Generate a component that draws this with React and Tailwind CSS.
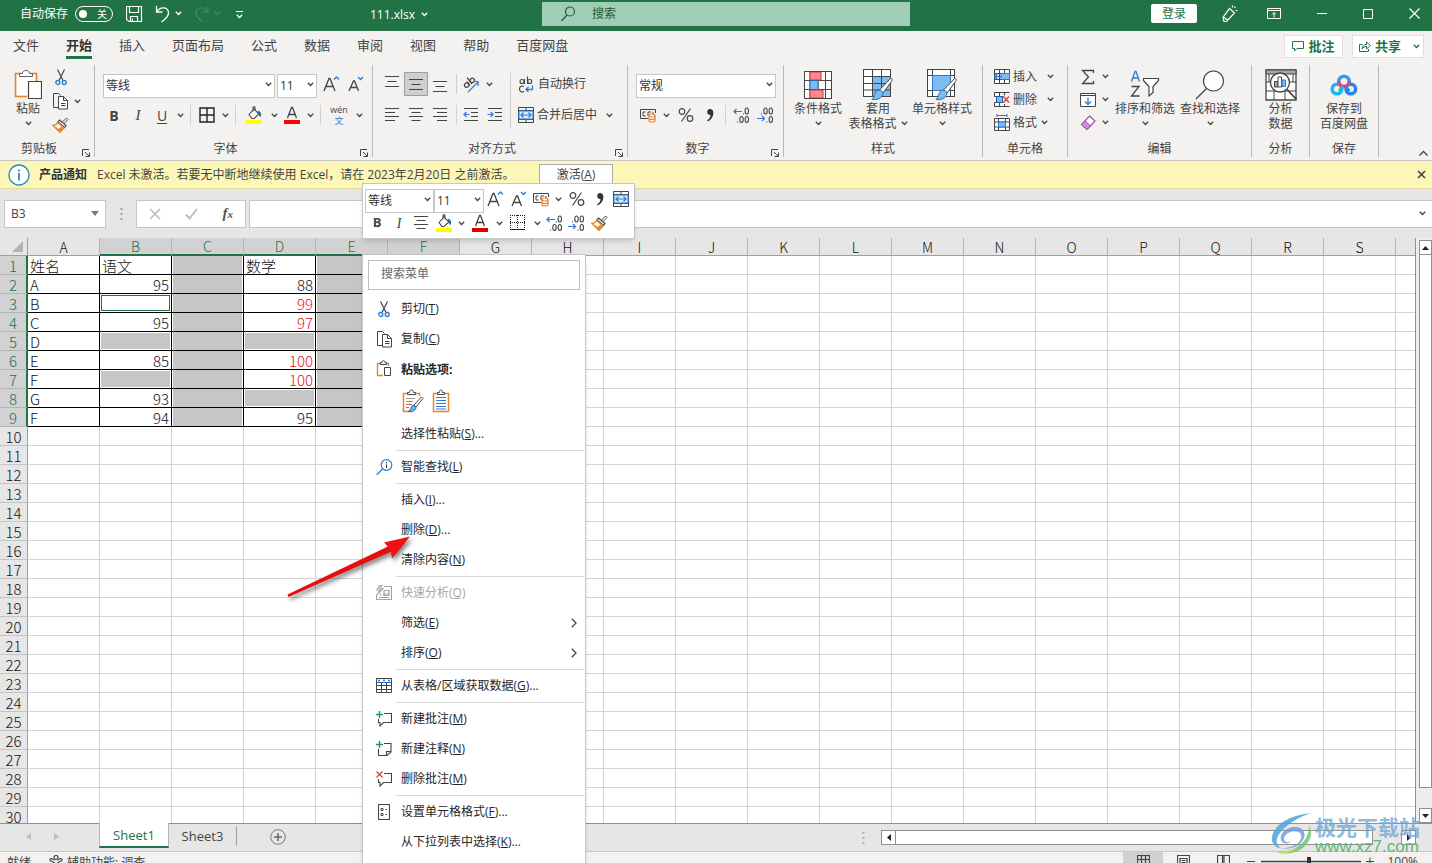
import React from 'react';

const INK = '#444444';
const BLUE = '#2b7cd3';

function Svg({ w = 16, h = 16, vb, children, className = '' }) {
  return (
    <svg
      width={w}
      height={h}
      viewBox={vb || `0 0 ${w} ${h}`}
      fill="none"
      stroke={INK}
      strokeWidth="1"
      className={`shrink-0 ${className}`}
      aria-hidden="true"
    >
      {children}
    </svg>
  );
}

const Chevron = ({ className = '' }) => (
  <Svg w={7} h={5} className={className}>
    <path d="M.8.8 3.5 3.5 6.200.8" stroke="currentColor" strokeWidth="1.3" />
  </Svg>
);

const CaretBtn = ({ label = '更多选项' }) => (
  <button type="button" aria-label={label} className="flex h-6 w-3 items-center justify-center">
    <Chevron />
  </button>
);

/* ---------- icons ---------- */
const Scissors = () => (
  <Svg w={12} h={17}>
    <path d="M2.500.5 8 11.500M9.500.5 4 11.500" stroke={INK} strokeWidth="1.200" />
    <circle cx="2.800" cy="13.500" r="2" stroke={BLUE} strokeWidth="1.300" />
    <circle cx="9.200" cy="13.500" r="2" stroke={BLUE} strokeWidth="1.300" />
  </Svg>
);
const Copy = () => (
  <Svg w={17} h={17}>
    <path d="M6.500 14.500h-5V.5h5l2 2" />
    <path d="M6.500 3.500h5l4 4v8.500h-9zM11.500 3.500v4h4M9 10.500h4.500M9 12.500h4.500" fill="#fff" />
  </Svg>
);
const Painter = () => (
  <Svg w={17} h={16}>
    <path d="M10 5.500 14.500 1l1.500 1.500L11.500 7" fill="#fff" />
    <path d="M7.500 3l6.500 5.500-1.500 2-6.500-5.500z" fill="#fff" strokeWidth="1.200" />
    <path d="M5.500 5.500l6.500 5.500-4 4.500L1 8.500c2 0 3.500-1 4.500-3z" fill="#fff" stroke="#e8852b" strokeWidth="1.300" />
    <path d="M2 9l5 3 2-2.500 2 2-3 3.500z" fill="#e8852b" stroke="none" />
  </Svg>
);
const PasteBig = () => (
  <Svg w={28} h={32}>
    <path d="M7 4.500H1.500v23H13M17 4.500h5.500V12" stroke="#e8852b" strokeWidth="1.600" />
    <path d="M3 6h18v6h-7v14H3z" fill="#fff" stroke="none" />
    <path d="M5.500 7.500v-3h3c0-4 7-4 7 0h3v3z" fill="#fff" stroke="#666" />
    <path d="M14.500 12.500h13v17h-13z" fill="#fff" stroke={INK} strokeWidth="1.200" />
  </Svg>
);
const PasteSmall = () => (
  <Svg w={16} h={17}>
    <path d="M4 3.500H1.500v12H7M11 3.500h1.500V6" stroke="#e8852b" strokeWidth="1.400" />
    <path d="M4.500 4.500v-2h1.500c0-2.500 3-2.500 3 0h1.500v2z" fill="#fff" />
    <path d="M8.500 7.500h6v8h-6z" fill="#fff" />
  </Svg>
);
const PasteFormat = () => (
  <Svg w={22} h={24}>
    <path d="M6 4.500H1.500v18H10M14 4.500h3.500V7" stroke="#e8852b" strokeWidth="1.500" />
    <path d="M5.500 5.500v-2h2c0-3.500 4-3.500 4 0h2v2z" fill="#fff" />
    <path d="M4 9.500h9M4 12.500h7" stroke="#999" />
    <path d="M4 15.500h6M4 18.500h3" stroke="#e05050" />
    <path d="M19.500 8l1.500 1.500-7 8.500-2-2z" fill="#fff" />
    <path d="M11.500 16l2.500 2.500c0 3-3.500 4.500-7.500 4 2.500-1 2-5.500 5-6.500z" fill="#6bb1ea" stroke="#1f6cb5" />
  </Svg>
);
const PasteText = () => (
  <Svg w={18} h={24}>
    <path d="M5 4.500H1.500v18h15v-18H13" stroke="#e8852b" strokeWidth="1.500" />
    <path d="M5.500 5.500v-2h2c0-3.500 3-3.500 3 0h2v2z" fill="#fff" />
    <path d="M4 8.500h10M4 11.500h10M4 14.500h10M4 17.500h10M4 20h10" stroke={BLUE} />
  </Svg>
);
const FontSize = ({ up }) => (
  <Svg w={17} h={18}>
    <path d={up ? 'M1 16 6 3.500h1L12 16M3 11.500h7' : 'M2 16 6.500 6h1L11.500 16M3.500 12.500h6.500'} strokeWidth="1.300" />
    <path d={up ? 'M11 4.500l2.500-2.500L16 4.500' : 'M11 2l2.500 2.500L16 2'} stroke={BLUE} strokeWidth="1.300" />
  </Svg>
);
const Borders = () => (
  <Svg w={16} h={16}>
    <path d="M1 1h14v14H1zM8 1v14M1 8h14" stroke="#222" strokeWidth="1.400" />
  </Svg>
);
const DottedBorders = () => (
  <Svg w={16} h={16}>
    <path d="M0 .5h15M.5 0v15M14.500 0v15M7.500 0v15M0 7.500h15" stroke="#222" strokeDasharray="1 1" />
    <path d="M0 14.500h15" stroke="#222" />
  </Svg>
);
const Bucket = () => (
  <Svg w={17} h={18}>
    <path d="M3 8.500 8 3l5 5-5 4.500H6zM7 5.500V1.500c0-1 2-1 2 0V5" fill="#fff" strokeWidth="1.100" />
    <path d="M12 5.500c2 .5 2.500 2.500 2 5" stroke="#1f5fae" strokeWidth="1.800" />
    <path d="M0 14h16v4H0z" fill="#ffff00" stroke="none" />
  </Svg>
);
const FontColor = ({ red = '#ff0000' }) => (
  <Svg w={16} h={18}>
    <path d="M3.500 12 7.500 1.500h1L12.500 12M5 8.500h6" strokeWidth="1.300" />
    <path d="M0 14h16v4H0z" fill={red} stroke="none" />
  </Svg>
);
const Lines = ({ d }) => (
  <Svg w={16} h={16}>
    <path d={d} strokeWidth="1.200" />
  </Svg>
);
const Orientation = () => (
  <Svg w={18} h={17}>
    <g strokeWidth="1.200" transform="rotate(-40 6 6)">
      <circle cx="3" cy="7.500" r="2.200" />
      <path d="M5.500 5v5" />
      <path d="M8 2v8" />
      <circle cx="10.300" cy="7.500" r="2.200" />
    </g>
    <path d="M6 16 16 6M11.500 5.500h4.500V10" stroke={BLUE} strokeWidth="1.200" />
  </Svg>
);
const Wrap = () => (
  <Svg w={15} h={17}>
    <g strokeWidth="1.100">
      <circle cx="3" cy="5.500" r="2" />
      <path d="M5.500 3v5M8.500.5v7.500" />
      <circle cx="10.700" cy="5.500" r="2" />
      <path d="M5 10.500c-3-1.500-4.500.5-4.500 2.500s2 4 4.500 2.500" />
    </g>
    <path d="M13.500 9.500v4H7M9.500 11 7 13.500 9.500 16" stroke={BLUE} strokeWidth="1.300" />
  </Svg>
);
const Merge = () => (
  <Svg w={16} h={16}>
    <path d="M.5.5h15v15H.5zM.5 3.500h15M.5 12.500h15M8 .5v3M8 12.500v3" />
    <path d="M1 4h14v8H1z" fill="#d8ebfa" stroke={BLUE} />
    <path d="M3 8h10M5.500 5.500 3 8l2.500 2.500M10.500 5.500 13 8l-2.500 2.500" stroke={BLUE} strokeWidth="1.200" />
  </Svg>
);
const Indent = ({ right }) => (
  <Svg w={16} h={14}>
    <path d="M1 .5h14M8 4.500h7M8 8.500h7M1 12.500h14" strokeWidth="1.100" />
    <path d={right ? 'M.5 6.500h5.500M3.500 4 6 6.500 3.500 9' : 'M1 6.500h5.500M3.500 4 1 6.500 3.500 9'} stroke={BLUE} strokeWidth="1.200" />
  </Svg>
);
const Money = () => (
  <Svg w={17} h={15}>
    <path d="M8 10.500H.5v-9h15V5" />
    <path d="M5.500 4H3v4h2.500M8 8V4h3M13 4v2" />
    <path d="M9 7.500v5c0 2 6 2 6 0v-5" fill="#fff" stroke="#e8852b" strokeWidth="1.200" />
    <ellipse cx="12" cy="7.500" rx="3" ry="1.500" fill="#fff" stroke="#e8852b" strokeWidth="1.200" />
    <path d="M9 10.200c0 1.800 6 1.800 6 0" stroke="#e8852b" strokeWidth="1.200" />
  </Svg>
);
const Percent = () => (
  <Svg w={16} h={16}>
    <circle cx="4" cy="4.500" r="2.800" strokeWidth="1.200" />
    <circle cx="12" cy="11.500" r="2.800" strokeWidth="1.200" />
    <path d="M12.500 1.500l-9 13" strokeWidth="1.200" />
  </Svg>
);
const Comma = () => (
  <Svg w={10} h={14}>
    <path d="M5 1a3 3 0 1 0 .5 6C5.500 9.500 4 11 2 12.500l.8.8C6 11.800 8.500 9 8.300 4.500 8.200 2.200 7 1 5 1z" fill="#333" stroke="none" />
  </Svg>
);
const Decimal = ({ less }) => (
  <Svg w={17} h={17}>
    {less ? (
      <>
        <path d="M0 11.500h7.500M5 9l2.500 2.500L5 14" stroke={BLUE} strokeWidth="1.200" />
        <g strokeWidth="1.100">
          <ellipse cx="8.500" cy="4" rx="1.700" ry="3" />
          <ellipse cx="13.800" cy="4" rx="1.700" ry="3" />
          <ellipse cx="13.800" cy="12.500" rx="1.700" ry="3" />
          <path d="M4.500 7.500v-1M10 15.500v-1" />
        </g>
      </>
    ) : (
      <>
        <path d="M.8 4.500H9M3.500 2 1 4.500 3.500 7" stroke={BLUE} strokeWidth="1.200" />
        <g strokeWidth="1.100">
          <ellipse cx="13.800" cy="4" rx="1.700" ry="3" />
          <ellipse cx="8.500" cy="12.500" rx="1.700" ry="3" />
          <ellipse cx="13.800" cy="12.500" rx="1.700" ry="3" />
          <path d="M10.500 7.500v-1M4.500 15.500v-1" />
        </g>
      </>
    )}
  </Svg>
);
const Launcher = () => (
  <Svg w={8} h={8}>
    <path d="M.5 7V.5H7M3 3l4 4M7.500 3.500v4h-4" strokeWidth="1" />
  </Svg>
);
const CondFormat = () => (
  <Svg w={28} h={28}>
    <path d="M.5.5h27v27H.5z" fill="#fff" />
    <path d="M.5 9.500h27M.5 18.500h27M6 .5v27M21.500.5v27M14 9.500v9" />
    <path d="M6 1h11v8H6zM6 19h13v8H6z" fill="#ff8a8f" stroke="#d13438" />
    <path d="M6 9.500h8v9H6z" fill="#7dbcf0" stroke="#1f6cb5" />
    <path d="M.5.5h27v27H.5z" />
  </Svg>
);
const Brush = ({ x }) => (
  <g transform={`translate(${x} 8)`}>
    <path d="M18.500 1.500c2 0 2 1.500 1 3L11 16l-3.500-3z" fill="#fff" />
    <path d="M7 13c1.500 0 4 1.500 4 3.500C10 22 4 23 0 22.500c3-2 2-9 7-9.500z" fill="#7dbcf0" stroke="#1f6cb5" />
  </g>
);
const TableFormat = () => (
  <Svg w={32} h={32}>
    <path d="M1.500.5h27v27h-27z" fill="#fff" />
    <path d="M10.500 7.500h18v20h-18z" fill="#7dbcf0" stroke={BLUE} />
    <path d="M1.500.5h27v27h-27zM1.500 7.500h27M1.500 14.500h27M1.500 21h27M10.500.5v27M19.500.5v27" />
    <Brush x={10} />
  </Svg>
);
const CellStyle = () => (
  <Svg w={32} h={32}>
    <path d="M1.500.5h27v27h-27z" fill="#fff" />
    <path d="M1.500.5h27v27h-27zM1.500 6.500h27M1.500 21.500h27M6.500.5v27M24.500.5v27" />
    <path d="M6.500 6.500h18v15h-18z" fill="#7dbcf0" stroke={BLUE} />
    <Brush x={10} />
  </Svg>
);
const CellInsert = () => (
  <Svg w={16} h={15}>
    <path d="M.5.5h15v14H.5zM5.500.5v14M10.500.5v14M.5 4.500h15M.5 10.500h15" fill="#fff" />
    <path d="M7 4.500h8.500v6H7z" fill="#7dbcf0" stroke={BLUE} />
    <path d="M0 7.500h7M3.500 4.500l-3 3 3 3" stroke={BLUE} strokeWidth="1.300" />
  </Svg>
);
const CellDelete = () => (
  <Svg w={16} h={15}>
    <path d="M.5.5h15M.5 14.500h15M.5.5v4h9M.5 14.500v-4h9M5.500.5v4M10.500.5v3M5.500 10.500v4M10.500 12v2" fill="#fff" />
    <path d="M2.500 4.500h6v6h-6z" fill="#7dbcf0" stroke="#1f5fae" />
    <path d="M9.500 4.500l5.500 6M15 4.500l-5.500 6" stroke="#e03a3e" strokeWidth="1.300" />
  </Svg>
);
const CellFormat = () => (
  <Svg w={16} h={17}>
    <path d="M3 1.500h10M3 0v3M13 0v3" stroke={BLUE} />
    <path d="M.5 4.500h15v12H.5zM4.500 4.500v12M11.500 4.500v12M.5 8h15M.5 13h15" fill="#fff" />
    <path d="M4.500 8h7v5h-7z" fill="#7dbcf0" stroke={BLUE} />
  </Svg>
);
const Sigma = () => (
  <Svg w={14} h={16}>
    <path d="M12.500 4V1.500h-11L7.500 8l-6 6.500h11V12" strokeWidth="1.300" />
  </Svg>
);
const Fill = () => (
  <Svg w={16} h={14}>
    <path d="M.5.5h15v13H.5zM.5 2.500h15" fill="#fff" />
    <path d="M8 4.500v7M5 8.500l3 3 3-3" stroke={BLUE} strokeWidth="1.300" />
  </Svg>
);
const Eraser = () => (
  <Svg w={16} h={15}>
    <path d="M9.500 1 15 6l-8 8.500L1.500 9.500z" fill="#fff" stroke="#a349b0" strokeWidth="1.200" />
    <path d="M5 6l5.500 5-3.500 3.500L1.500 9.500z" fill="#d48fdc" stroke="#a349b0" />
  </Svg>
);
const SortFilter = () => (
  <Svg w={30} h={30}>
    <path d="M1.500 11.500 5 1.500h1l3.500 10M2.800 8h5.400" stroke={BLUE} strokeWidth="1.300" />
    <path d="M1.500 16.500h7.500l-7.500 9.500h8" strokeWidth="1.300" />
    <path d="M13.500 8.500h15v2l-5.500 6v6l-4 3.500v-9.500l-5.500-6z" fill="#fff" strokeWidth="1.200" />
  </Svg>
);
const FindBig = () => (
  <Svg w={30} h={30}>
    <circle cx="18.500" cy="11" r="10" fill="#fff" strokeWidth="1.200" />
    <path d="M11.500 18.500 1 29" strokeWidth="1.300" />
  </Svg>
);
const Analyze = () => (
  <Svg w={32} h={32}>
    <path d="M1 1h30v30H1z" fill="#fff" strokeWidth="1.300" />
    <path d="M1 1h30v4H1z" fill="#a8a8a8" />
    <path d="M1 13h30M1 22h30M9 22v9M20 22v9M4 5v8M28 5v8" />
    <circle cx="15" cy="13.500" r="9.500" fill="#fff" strokeWidth="1.300" />
    <path d="M9.500 12.500h3.500v5.500H9.500z" fill="#aaa" />
    <path d="M13 8h3.500v10H13z" fill="#fff" />
    <path d="M17 11h3.500v6.500H17z" fill="#7dbcf0" stroke={BLUE} />
    <path d="M22 20.500l9.500 10" strokeWidth="1.800" />
  </Svg>
);
const BaiduDisk = () => (
  <Svg w={28} h={24}>
    <circle cx="7" cy="16" r="4.800" stroke="#22b4ee" strokeWidth="3.500" />
    <circle cx="20.800" cy="16" r="4.800" stroke="#2a86ea" strokeWidth="3.500" />
    <path d="M8.800 9.500a5.300 5.300 0 1 1 10.400 0" stroke="#2f9bf0" strokeWidth="3.500" />
    <path d="M9 8.500a5 5 0 0 0 10 0" stroke="#ee4465" strokeWidth="3.500" />
    <path d="M15 13.500l4.500 4.500" stroke="#2a86ea" strokeWidth="3" />
    <path d="M13 13.500l-4 4.500" stroke="#22b4ee" strokeWidth="3" />
  </Svg>
);
const SmartLookup = () => (
  <Svg w={17} h={17}>
    <circle cx="10.500" cy="6" r="5.300" stroke={BLUE} strokeWidth="1.200" />
    <path d="M6.500 10 .8 15.700" stroke={BLUE} strokeWidth="1.300" />
    <path d="M10.500 5.500v3.500M10.500 3v1.300" stroke="#222" />
  </Svg>
);
const QuickAnalysis = () => (
  <Svg w={16} h={16}>
    <g stroke="#a5a5a5" strokeWidth="1.200">
      <path d="M8 1.500h7.500v13H.5V9M3.500.5 1 5h3L1.500 9 7 3.500H4L6 .5z" />
      <path d="M3 12.500h10M4.500 10.500v-2M7 9h5.500M8 5.500h5v5H8z" />
    </g>
  </Svg>
);
const TableIcon = () => (
  <Svg w={16} h={16}>
    <path d="M.5.5h15v14H.5zM.5 7.500h15M.5 11.500h15M5.500 4v10.500M10.500 4v10.500" />
    <path d="M.5 4.500h15" stroke="#1f5fae" />
    <path d="M2 2.500h2M7 2.500h2M12 2.500h2" stroke={BLUE} strokeWidth="1.300" />
  </Svg>
);
const CommentNew = () => (
  <Svg w={16} h={16}>
    <path d="M8 2.500h7.500v9H7.500L4 15v-3.500H2.500V8" strokeWidth="1.100" />
    <path d="M3.500 0v7M0 3.500h7" stroke="#1f9a50" strokeWidth="1.400" />
  </Svg>
);
const NoteNew = () => (
  <Svg w={16} h={16}>
    <path d="M8 2.500h7v8.500l-4 3.500H2.500V8M15 10.500h-4.500v4" strokeWidth="1.100" />
    <path d="M3.500 0v7M0 3.500h7" stroke="#1f9a50" strokeWidth="1.400" />
  </Svg>
);
const CommentDel = () => (
  <Svg w={16} h={16}>
    <path d="M8 2.500h7.500v9H7.500L4 15v-3.500H2.500V8" strokeWidth="1.100" />
    <path d="M.5.5l6 6M6.500.5l-6 6" stroke="#e03a3e" strokeWidth="1.200" />
  </Svg>
);
const FormatCells = () => (
  <Svg w={12} h={17}>
    <path d="M.5.5h11v15H.5z" strokeWidth="1.100" />
    <path d="M3 4.500h2v2H3zM3 9.500h2v2H3zM7.500 5.500h1.500M7.500 10.500h1.500" />
  </Svg>
);

/* ---------- building blocks ---------- */
const Btn = ({ label, children, className = 'w-6' }) => (
  <button type="button" aria-label={label} className={`flex h-6 shrink-0 items-center justify-center ${className}`}>
    {children}
  </button>
);

function Combo({ label, value, className }) {
  return (
    <div className={`relative shrink-0 ${className}`}>
      <select
        aria-label={label}
        className="h-full w-full appearance-none border border-[#c6c6c6] bg-white pl-[2px] text-[12px] leading-4 text-[#333]"
      >
        <option>{value}</option>
      </select>
      <span className="pointer-events-none absolute inset-y-0 right-[3px] flex items-center">
        <Chevron />
      </span>
    </div>
  );
}

function Group({ title, launcher, className, pad = '', children }) {
  return (
    <section className={`flex h-[92px] shrink-0 flex-col border-r border-[#b9b9b9] ${className}`} aria-label={title}>
      <div className={`flex h-[76px] pt-1 ${pad}`}>{children}</div>
      <div className={`relative flex h-4 items-center justify-center text-[12px] leading-4 ${launcher ? 'pr-4' : ''}`}>
        {title}
        {launcher && (
          <button type="button" aria-label={`${title}设置`} className="absolute bottom-0 right-1">
            <Launcher />
          </button>
        )}
      </div>
    </section>
  );
}

const Sep = ({ className = 'mx-1' }) => <span className={`h-5 w-px shrink-0 bg-[#d2d0ce] ${className}`} />;

function Big({ icon, lines, caret, inlineCaret, className }) {
  return (
    <button type="button" className={`flex shrink-0 flex-col items-center text-[12px] leading-[15px] ${className}`}>
      <span className="flex h-8 items-center justify-center">{icon}</span>
      {lines.map((l, i) => (
        <span key={l} className="flex items-center gap-1 whitespace-nowrap">
          {l}
          {inlineCaret && i === lines.length - 1 && <Chevron />}
        </span>
      ))}
      {caret && (
        <span className="flex h-[15px] items-center">
          <Chevron />
        </span>
      )}
    </button>
  );
}

const A = {
  top: 'M1 .5h14M3.500 5.500h9M1 10.500h14',
  middle: 'M1 3.500h14M3.500 8.500h9M1 13.500h14',
  bottom: 'M1 5.500h14M3.500 10.500h9M1 15.500h14',
  left: 'M1 1.500h14M1 5.500h10M1 9.500h14M1 13.500h10',
  center: 'M1 1.500h14M3.500 5.500h9M1 9.500h14M3.500 13.500h9',
  right: 'M1 1.500h14M5 5.500h10M1 9.500h14M5 13.500h10',
};

/* ---------- title bar ---------- */
function TitleBar() {
  return (
    <header className="flex h-[31px] shrink-0 items-start bg-[#217346] text-[12px] text-white">
      <div className="flex h-[27px] w-[542px] shrink-0 items-center pl-5">
        <span className="w-[48px] whitespace-nowrap">自动保存</span>
        <button
          type="button"
          role="switch"
          aria-checked="false"
          aria-label="自动保存"
          className="ml-[7px] flex h-4 w-[38px] items-center justify-between rounded-full border border-white px-[3px]"
        >
          <span className="h-2 w-2 rounded-full bg-white" />
          <span className="pr-0.5 text-[10px] leading-3">关</span>
        </button>
        <button type="button" aria-label="保存" className="ml-[13px] pt-0.5">
          <Svg w={17} h={17}>
            <path d="M.5.5h15v15H3l-2.500-2zM3.500.5v6h9v-6M4.500 15.500v-5h7v5M6.500 15.500v-3" stroke="#fff" strokeWidth="1.200" />
          </Svg>
        </button>
        <button type="button" aria-label="撤消" className="ml-3">
          <Svg w={16} h={18}>
            <path d="M1.500 1v6h6M1.500 7C5 1 13.500 1.500 13.500 8c0 4-3 5.500-7 9" stroke="#fff" strokeWidth="1.300" />
          </Svg>
        </button>
        <Chevron className="ml-1" />
        <button type="button" aria-label="恢复" disabled className="ml-3">
          <Svg w={16} h={18}>
            <path d="M14 1v6H8M14 7C10.500 1 2 1.500 2 8c0 4 3 5.500 7 9" stroke="#3f8a60" strokeWidth="1.300" />
          </Svg>
        </button>
        <Chevron className="ml-1 text-[#3f8a60]" />
        <button type="button" aria-label="自定义快速访问工具栏" className="ml-[15px] flex flex-col items-center gap-0.5 pt-0.5">
          <span className="h-px w-[7px] bg-white" />
          <Chevron />
        </button>
        <span className="ml-auto mr-[114px] flex items-center gap-1.5 pt-0.5">
          111.xlsx <Chevron />
        </span>
      </div>
      <label className="mt-0.5 flex h-6 w-[368px] items-center bg-[#a0cdb5] pl-[18px] text-[#1d5d38]">
        <Svg w={16} h={16}>
          <circle cx="10" cy="5.500" r="4.500" stroke="#1d5d38" strokeWidth="1.200" />
          <path d="M7 9 1.500 15" stroke="#1d5d38" strokeWidth="1.200" />
        </Svg>
        <input
          aria-label="搜索"
          placeholder="搜索"
          className="ml-4 w-full bg-transparent text-[12px] placeholder:text-[#1d5d38] focus:outline-none"
        />
      </label>
      <div className="ml-auto flex h-[27px] shrink-0 items-center pr-3">
        <button type="button" className="mr-6 h-[19px] w-[46px] rounded-[2px] bg-white leading-4 text-[#217346]">
          登录
        </button>
        <button type="button" aria-label="墨迹" className="mr-[28px]">
          <Svg w={18} h={18}>
            <path d="M8.500 3.500l5 4.500L5.500 16.500H3L2 12.500zM2.500 12l4.500 3.500M11.500.5v2M14.500 1.500l-1 1.500M16.500 5.500h-2" stroke="#fff" strokeWidth="1.200" />
          </Svg>
        </button>
        <button type="button" aria-label="功能区显示选项" className="mr-9">
          <Svg w={14} h={11}>
            <path d="M.5.5h13v10H.5zM.5 2.500h13M7 9.500v-5M5 6.500l2-2 2 2" stroke="#fff" />
          </Svg>
        </button>
        <button type="button" aria-label="最小化" className="mr-9">
          <Svg w={10} h={10}><path d="M0 4.500h10" stroke="#fff" /></Svg>
        </button>
        <button type="button" aria-label="最大化" className="mr-9">
          <Svg w={10} h={10}><path d="M.5.5h9v9h-9z" stroke="#fff" /></Svg>
        </button>
        <button type="button" aria-label="关闭">
          <Svg w={11} h={11}><path d="M.5.5l10 10M10.500.5l-10 10" stroke="#fff" strokeWidth="1.200" /></Svg>
        </button>
      </div>
    </header>
  );
}

const TABS = ['文件', '开始', '插入', '页面布局', '公式', '数据', '审阅', '视图', '帮助', '百度网盘'];

function TabRow() {
  return (
    <nav className="flex h-[30px] shrink-0 items-center pl-[13px] pr-2">
      <div className="flex gap-[27px] text-[13px] leading-[22px]">
        {TABS.map((t) => (
          <button
            key={t}
            type="button"
            className={
              t === '开始'
                ? 'h-[26px] whitespace-nowrap border-b-[3px] border-[#217346] font-bold text-[#333]'
                : 'h-[26px] whitespace-nowrap border-b-[3px] border-transparent'
            }
          >
            {t}
          </button>
        ))}
      </div>
      <div className="ml-auto flex gap-[9px] text-[13px] font-bold leading-5 text-[#217346]">
        <button type="button" className="flex h-[23px] w-[59px] items-center justify-center gap-1 border border-[#e1dfdd] bg-white">
          <Svg w={12} h={11}><path d="M.5.5h11v7H5L2.500 10V7.500h-2z" stroke="#217346" /></Svg>
          批注
        </button>
        <button type="button" className="flex h-[23px] w-[72px] items-center gap-1 border border-[#e1dfdd] bg-white pl-[6px]">
          <Svg w={12} h={12}>
            <path d="M3.500 4.500h-3v7h9V9M3 9c.5-3 2-4.500 4.500-4.500V2L11.500 5.500 7.500 9V6.500C5.500 6.500 4 7.500 3 9z" stroke="#217346" />
          </Svg>
          共享
          <Chevron className="ml-2" />
        </button>
      </div>
    </nav>
  );
}

/* ---------- ribbon ---------- */
function Ribbon() {
  return (
    <div className="flex h-[100px] shrink-0 border-b border-[#c8c6c4] pt-1">
      <Group title="剪贴板" launcher className="w-[95px]">
        <button type="button" className="ml-2.5 flex w-9 flex-col items-center text-[12px] leading-4">
          <PasteBig />
          粘贴
          <span className="flex h-3 items-center"><Chevron /></span>
        </button>
        <div className="ml-1.5 flex flex-col">
          <div className="flex h-5 items-start pl-[3px]"><button type="button" aria-label="剪切"><Scissors /></button></div>
          <div className="flex h-6 items-center">
            <button type="button" aria-label="复制"><Copy /></button>
            <span className="ml-0.5"><CaretBtn /></span>
          </div>
          <div className="flex h-6 items-center"><button type="button" aria-label="格式刷"><Painter /></button></div>
        </div>
      </Group>

      <Group title="字体" launcher className="w-[278px]" pad="pl-[7px]">
        <div className="flex flex-col">
          <div className="flex h-[30px] items-center">
            <Combo label="字体" value="等线" className="ml-px h-6 w-[172px]" />
            <Combo label="字号" value="11" className="ml-[2px] h-6 w-[40px]" />
            <Btn label="增大字号" className="ml-0.5 w-6"><FontSize up /></Btn>
            <Btn label="减小字号"><FontSize /></Btn>
          </div>
          <div className="flex h-8 items-center">
            <Btn label="加粗"><b className="text-[14px]">B</b></Btn>
            <Btn label="倾斜"><i className="font-['Liberation_Serif',serif] text-[15px]">I</i></Btn>
            <Btn label="下划线"><u className="text-[14px] underline-offset-2">U</u></Btn>
            <CaretBtn />
            <Sep />
            <Btn label="边框"><Borders /></Btn>
            <CaretBtn />
            <Sep />
            <Btn label="填充颜色" className="w-7"><Bucket /></Btn>
            <CaretBtn />
            <Btn label="字体颜色"><FontColor /></Btn>
            <CaretBtn />
            <Sep />
            <Btn label="拼音" className="w-7">
              <span className="flex flex-col items-center text-[9px] leading-[11px]">
                <span>wén</span>
                <span className="text-[#2b7cd3]">文</span>
              </span>
            </Btn>
            <CaretBtn />
          </div>
        </div>
      </Group>

      <Group title="对齐方式" launcher className="w-[255px]" pad="pl-[7px]">
        <div className="flex flex-col">
          <div className="flex h-[30px] items-center">
            <Btn label="顶端对齐"><Lines d={A.top} /></Btn>
            <Btn label="垂直居中" className="w-6 border border-[#9f9f9f] bg-[#cfcfcf]"><Lines d={A.middle} /></Btn>
            <Btn label="底端对齐"><Lines d={A.bottom} /></Btn>
            <Sep className="ml-1 mr-0.5" />
            <Btn label="方向"><Orientation /></Btn>
            <CaretBtn />
          </div>
          <div className="flex h-8 items-center">
            <Btn label="左对齐"><Lines d={A.left} /></Btn>
            <Btn label="居中"><Lines d={A.center} /></Btn>
            <Btn label="右对齐"><Lines d={A.right} /></Btn>
            <Sep className="ml-1 mr-0.5" />
            <Btn label="减少缩进"><Indent /></Btn>
            <Btn label="增加缩进"><Indent right /></Btn>
          </div>
        </div>
        <span className="ml-[3px] mt-1 h-14 w-px bg-[#d2d0ce]" />
        <div className="flex flex-col pl-[7px] text-[12px]">
          <div className="flex h-[30px] items-center">
            <button type="button" className="flex items-center gap-1 whitespace-nowrap pl-px"><Wrap />自动换行</button>
          </div>
          <div className="flex h-8 items-center">
            <button type="button" className="flex items-center gap-[3px] whitespace-nowrap"><Merge />合并后居中</button>
            <span className="ml-1.5"><CaretBtn /></span>
          </div>
        </div>
      </Group>

      <Group title="数字" launcher className="w-[156px]" pad="pl-2">
        <div className="flex flex-col">
          <div className="flex h-[30px] items-center"><Combo label="数字格式" value="常规" className="h-6 w-[140px]" /></div>
          <div className="flex h-8 items-center">
            <Btn label="会计数字格式"><Money /></Btn>
            <CaretBtn />
            <Btn label="百分比样式" className="ml-0.5 w-6"><Percent /></Btn>
            <Btn label="千位分隔样式"><Comma /></Btn>
            <Sep className="mx-[3px]" />
            <Btn label="增加小数位数"><Decimal /></Btn>
            <Btn label="减少小数位数"><Decimal less /></Btn>
          </div>
        </div>
      </Group>

      <Group title="样式" className="w-[199px]" pad="pl-1">
        <Big className="w-[60px]" icon={<CondFormat />} lines={['条件格式']} caret />
        <Big className="w-[60px]" icon={<TableFormat />} lines={['套用', '表格格式']} inlineCaret />
        <Big className="w-[68px]" icon={<CellStyle />} lines={['单元格样式']} caret />
      </Group>

      <Group title="单元格" className="w-[85px]" pad="pl-[11px]">
        <div className="-mt-1 flex flex-col text-[12px]">
          {[['插入', <CellInsert key="i" />], ['删除', <CellDelete key="d" />], ['格式', <CellFormat key="f" />]].map(([t, icon]) => (
            <button key={t} type="button" className="flex h-[23px] items-center whitespace-nowrap">
              {icon}
              <span className="ml-[3px]">{t}</span>
              <Chevron className={t === '格式' ? 'ml-1' : 'ml-2.5'} />
            </button>
          ))}
        </div>
      </Group>

      <Group title="编辑" className="w-[184px]" pad="pl-3">
        <div className="-mt-1 flex flex-col">
          {[['自动求和', <Sigma key="s" />], ['填充', <Fill key="f" />], ['清除', <Eraser key="e" />]].map(([t, icon]) => (
            <button key={t} type="button" aria-label={t} className="flex h-[23px] items-center gap-1.5">
              <span className="flex w-4 justify-center">{icon}</span>
              <Chevron />
            </button>
          ))}
        </div>
        <Big className="ml-1 w-[64px]" icon={<SortFilter />} lines={['排序和筛选']} caret />
        <Big className="w-[66px]" icon={<FindBig />} lines={['查找和选择']} caret />
      </Group>

      <Group title="分析" className="w-[58px]">
        <Big className="w-full" icon={<Analyze />} lines={['分析', '数据']} />
      </Group>
      <Group title="保存" className="w-[69px]">
        <Big className="w-full" icon={<BaiduDisk />} lines={['保存到', '百度网盘']} />
      </Group>
      <button type="button" aria-label="折叠功能区" className="ml-auto flex items-end pb-1 pr-1">
        <Svg w={9} h={6}><path d="M.5 5.500l4-4 4 4" strokeWidth="1.300" /></Svg>
      </button>
    </div>
  );
}

function NoticeBar() {
  return (
    <div className="flex h-7 shrink-0 items-center border-b border-[#e0dca0] bg-[#fcf7b6] pl-2 pr-[6px] text-[12px]">
      <Svg w={22} h={22}>
        <circle cx="11" cy="11" r="10" fill="#fff" stroke="#2b88c8" strokeWidth="1.300" />
        <path d="M11 9v7.500M11 5.500v2" stroke="#1b6fc0" strokeWidth="1.600" />
      </Svg>
      <b className="ml-[9px] whitespace-nowrap text-[#333]">产品通知</b>
      <span className="ml-2.5 w-[442px] whitespace-nowrap">Excel 未激活。若要无中断地继续使用 Excel，请在 2023年2月20日 之前激活。</span>
      <button type="button" className="h-[22px] w-[74px] border border-[#ababab] bg-white leading-5">
        激活(<u>A</u>)
      </button>
      <button type="button" aria-label="关闭通知" className="ml-auto">
        <Svg w={9} h={9}><path d="M1 1l7 7M8 1 1 8" strokeWidth="1.600" /></Svg>
      </button>
    </div>
  );
}

function FormulaBar() {
  return (
    <div className="flex h-[49px] shrink-0 items-center pl-1">
      <div className="flex h-7 w-[102px] items-center border border-[#c6c6c6] bg-white pr-1.5">
        <input aria-label="名称框" defaultValue="B3" className="w-20 bg-transparent pl-1.5 text-[12px] text-[#444] focus:outline-none" />
        <Svg w={8} h={5} className="ml-auto"><path d="M0 0h8L4 5z" fill="#777" stroke="none" /></Svg>
      </div>
      <Svg w={3} h={12} className="ml-[14px]">
        <path d="M1.500 0v2M1.500 5v2M1.500 10v2" stroke="#a0a0a0" strokeWidth="2" />
      </Svg>
      <div className="ml-[13px] flex h-7 w-[110px] items-center justify-between border border-[#c6c6c6] bg-white px-3">
        <button type="button" aria-label="取消"><Svg w={12} h={12}><path d="M1 1l10 10M11 1 1 11" stroke="#bdbdbd" strokeWidth="1.600" /></Svg></button>
        <button type="button" aria-label="输入"><Svg w={13} h={12}><path d="M1 6.500 4.500 10.500 12 1" stroke="#bdbdbd" strokeWidth="2" /></Svg></button>
        <button type="button" aria-label="插入函数" className="font-['Liberation_Serif',serif] text-[15px] font-bold italic leading-5 text-[#555]">
          f<span className="text-[11px]">x</span>
        </button>
      </div>
      <div className="ml-[3px] flex h-7 min-w-0 flex-1 items-center border border-r-0 border-[#c6c6c6] bg-white pr-1.5">
        <input aria-label="编辑栏" className="min-w-0 flex-1 bg-transparent px-2 text-[12px] focus:outline-none" />
        <Chevron />
      </div>
    </div>
  );
}

/* ---------- sheet ---------- */
const COLS = 'ABCDEFGHIJKLMNOPQRST'.split('');
const DATA = [
  ['姓名', '语文', null, '数学'],
  ['A', '95', null, '88'],
  ['B', '', null, '99'],
  ['C', '95', null, '97'],
  ['D', null, null, null],
  ['E', '85', null, '100'],
  ['F', null, null, '100'],
  ['G', '93', null, null],
  ['F', '94', null, '95'],
];
const RED = ['99', '97', '100'];
const ROWS = Array.from({ length: 30 }, (_, i) => i);

function cellClass(r, c) {
  const base = 'h-[19px] whitespace-nowrap border-b border-r px-0.5 pb-0 pt-0.5';
  if (r > 8 || c > 5) return `${base} border-[#d4d4d4] bg-white`;
  const v = DATA[r][c];
  const line = `${base} border-black`;
  if (r === 2 && c === 1) return `${line} bg-white shadow-[inset_0_0_0_1px_#fff,inset_0_0_0_2px_#217346]`;
  if (v === null || v === undefined) {
    return c === 2 || c > 3
      ? `${line} bg-[#c6c6c6] shadow-[inset_1px_0_#fff,inset_-1px_0_#fff]`
      : `${line} bg-[#c6c6c6] shadow-[inset_0_0_0_1px_#fff]`;
  }
  const align = r > 0 && c > 0 ? 'text-right' : 'text-left';
  return `${line} bg-white ${align} ${RED.includes(v) ? 'text-[#e81123]' : 'text-[#111]'}`;
}

function Sheet() {
  return (
    <div className="flex min-h-0 flex-1 border-b border-[#8f8f8f]">
      <div className="min-w-0 flex-1 overflow-hidden border-r border-[#8f8f8f] bg-white">
        <table className="w-[1468px] table-fixed border-separate border-spacing-0 font-['Noto_Sans_CJK_SC',sans-serif] text-[15px] font-light leading-4">
          <colgroup>
            <col className="w-7" />
            {COLS.map((c) => <col key={c} className="w-[72px]" />)}
          </colgroup>
          <thead>
            <tr className="h-[18px]">
              <th className="h-[18px] border-b border-r border-[#9f9f9f] bg-[#e6e6e6] p-0">
                <Svg w={11} h={11} className="ml-auto mr-1"><path d="M11 0v11H0z" fill="#b2b2b2" stroke="none" /></Svg>
              </th>
              {COLS.map((c, i) => (
                <th
                  key={c}
                  scope="col"
                  className={
                    i > 0 && i < 6
                      ? 'h-[18px] border-b-2 border-r border-b-[#217346] border-r-[#b4b4b4] bg-[#d2d2d2] p-0 text-[14px] font-light text-[#217346]'
                      : 'h-[18px] border-b border-r border-b-[#9f9f9f] border-r-[#b4b4b4] bg-[#e6e6e6] p-0 text-[14px] font-light text-[#111]'
                  }
                >
                  {c}
                </th>
              ))}
            </tr>
          </thead>
          <tbody>
            {ROWS.map((r) => (
              <tr key={r} className="h-[19px]">
                <th
                  scope="row"
                  className={
                    r < 9
                      ? 'h-[19px] border-b border-r-2 border-b-[#b4b4b4] border-r-[#217346] bg-[#d2d2d2] px-0 pb-0 pt-0.5 text-center font-light text-[#217346]'
                      : 'h-[19px] border-b border-r border-b-[#c4c4c4] border-r-[#9f9f9f] bg-[#e6e6e6] px-0 pb-0 pt-0.5 text-center font-light text-[#111]'
                  }
                >
                  {r + 1}
                </th>
                {COLS.map((c, i) => (
                  <td key={c} className={cellClass(r, i)}>{r < 9 && i < 4 ? DATA[r][i] : null}</td>
                ))}
              </tr>
            ))}
          </tbody>
        </table>
      </div>
      <div className="flex w-4 shrink-0 flex-col bg-[#ededed] pl-[3px]">
        <button type="button" aria-label="向上滚动" className="mt-0.5 flex h-[15px] items-center justify-center border border-[#8f8f8f] bg-white">
          <Svg w={7} h={4}><path d="M0 4h7L3.500 0z" fill="#222" stroke="none" /></Svg>
        </button>
        <div className="flex-1 border border-t-0 border-[#8f8f8f] bg-white" />
        <div className="h-5" />
        <button type="button" aria-label="向下滚动" className="flex h-[15px] items-center justify-center border border-[#8f8f8f] bg-white">
          <Svg w={7} h={4}><path d="M0 0h7L3.500 4z" fill="#222" stroke="none" /></Svg>
        </button>
      </div>
    </div>
  );
}

function SheetTabs() {
  return (
    <div className="flex h-[27px] shrink-0 items-start pr-4 text-[13px] leading-[22px]">
      <div className="flex h-6 w-[99px] items-center gap-[23px] pl-[26px]">
        <Svg w={5} h={7}><path d="M5 0v7L0 3.500z" fill="#bdbdbd" stroke="none" /></Svg>
        <Svg w={5} h={7}><path d="M0 0v7l5-3.500z" fill="#bdbdbd" stroke="none" /></Svg>
      </div>
      <button type="button" className="-mt-px h-[25px] w-[70px] border-x border-b-2 border-x-[#b4b4b4] border-b-[#217346] bg-white text-[#217346]">Sheet1</button>
      <button type="button" className="h-6 w-[67px]">Sheet3</button>
      <span className="mt-0.5 h-5 w-px bg-[#9f9f9f]" />
      <button type="button" aria-label="新工作表" className="ml-[33px] mt-[5px]">
        <Svg w={16} h={16}><circle cx="8" cy="8" r="7.300" stroke="#777" /><path d="M8 4v8M4 8h8" stroke="#666" strokeWidth="1.500" /></Svg>
      </button>
      <div className="ml-auto mt-1.5 flex h-[15px] w-[554px]">
        <Svg w={3} h={12} className="mr-4 mt-0.5"><path d="M1.500 0v2M1.500 5v2M1.500 10v2" stroke="#b0b0b0" strokeWidth="2" /></Svg>
        <button type="button" aria-label="向左滚动" className="flex w-[15px] items-center justify-center border border-[#8f8f8f] bg-white">
          <Svg w={4} h={7}><path d="M4 0v7L0 3.500z" fill="#222" stroke="none" /></Svg>
        </button>
        <div className="flex-1 border border-l-0 border-[#8f8f8f] bg-white" />
        <div className="w-7" />
        <button type="button" aria-label="向右滚动" className="flex w-[15px] items-center justify-center border border-[#8f8f8f] bg-white">
          <Svg w={4} h={7}><path d="M0 0v7l4-3.500z" fill="#222" stroke="none" /></Svg>
        </button>
      </div>
    </div>
  );
}

function StatusBar() {
  return (
    <footer className="flex h-3 shrink-0 items-start overflow-hidden border-t border-[#c6c6c6] bg-[#f3f2f1] pl-[7px] pr-3.5 text-[12px]">
      <span className="pt-0.5 leading-[18px]">就绪</span>
      <Svg w={14} h={16} className="ml-[18px] mt-[3px]">
        <circle cx="7" cy="2.500" r="2" strokeWidth="1.200" />
        <path d="M5.500 5 2.500 3.500c-1.500 0-2 1.500-1 2.200L5 7.500v2.500l-2 4M8.500 5l3-1.500c1.500 0 2 1.500 1 2.200L9 7.500v2.500" strokeWidth="1.200" />
      </Svg>
      <span className="ml-1 whitespace-nowrap pt-0.5 leading-[18px]">辅助功能: 调查</span>
      <div className="ml-auto flex h-[22px] items-start">
        <span className="flex h-[22px] w-10 justify-center bg-[#d0d0d0] pt-[3px]">
          <Svg w={13} h={13}><path d="M.5.5h12v12H.5zM.5 4.500h12M.5 8.500h12M4.500.5v12M8.500.5v12" strokeWidth="1.200" /></Svg>
        </span>
        <span className="flex w-10 justify-center pt-[3px]">
          <Svg w={13} h={13}><path d="M.5.5h12v12H.5zM3 3.500h7v9H3zM4.500 5.500h4M4.500 7.500h4" strokeWidth="1.200" /></Svg>
        </span>
        <span className="flex w-10 justify-center pt-[3px]">
          <Svg w={13} h={13}><path d="M.5 0v9h5V0M7 0v9h5.500V0M.5.5h12" strokeWidth="1.200" /></Svg>
        </span>
        <Svg w={128} h={16} className="ml-1">
          <path d="M0 9.500h8M119 9.500h8M123 5.500v8" />
          <path d="M14 9.500h100" strokeWidth="1.500" />
          <path d="M60 5h4v10h-4z" fill="#333" stroke="none" />
        </Svg>
        <span className="ml-3 leading-[20px]">100%</span>
      </div>
    </footer>
  );
}

/* ---------- floating layers ---------- */
function MiniToolbar() {
  return (
    <div role="toolbar" aria-label="浮动工具栏" className="absolute left-[362px] top-[183px] flex h-14 w-[273px] flex-col border border-[#c6c6c6] bg-white pl-0.5 pt-[3px] shadow-md">
      <div className="flex h-6 items-center">
        <Combo label="字体" value="等线" className="h-6 w-[69px]" />
        <Combo label="字号" value="11" className="h-6 w-[50px]" />
        <Btn label="增大字号" className="w-[22px]"><FontSize up /></Btn>
        <Btn label="减小字号" className="w-6"><FontSize /></Btn>
        <Btn label="会计数字格式" className="w-[22px]"><Money /></Btn>
        <CaretBtn />
        <Btn label="百分比样式" className="w-[26px]"><Percent /></Btn>
        <Btn label="千位分隔样式" className="w-5"><Comma /></Btn>
        <Btn label="合并后居中" className="w-[22px]"><Merge /></Btn>
      </div>
      <div className="flex h-6 items-center">
        <Btn label="加粗" className="w-6"><b className="text-[13px]">B</b></Btn>
        <Btn label="倾斜" className="w-5"><i className="font-['Liberation_Serif',serif] text-[14px]">I</i></Btn>
        <Btn label="居中" className="w-6"><Lines d={A.center} /></Btn>
        <Btn label="填充颜色" className="w-[22px]"><Bucket /></Btn>
        <CaretBtn />
        <Btn label="字体颜色" className="w-[26px]"><FontColor red="#e00000" /></Btn>
        <CaretBtn />
        <Btn label="边框" className="w-[26px]"><DottedBorders /></Btn>
        <CaretBtn />
        <Btn label="增加小数位数" className="w-[22px]"><Decimal /></Btn>
        <Btn label="减少小数位数" className="w-[22px]"><Decimal less /></Btn>
        <Btn label="格式刷"><Painter /></Btn>
      </div>
    </div>
  );
}

function Item({ icon, text, k, tail = '', disabled, sub }) {
  return (
    <button type="button" role="menuitem" disabled={disabled} className={`flex h-[30px] w-full items-center pr-2 text-left ${disabled ? 'text-[#a6a6a6]' : ''}`}>
      <span className="flex w-[38px] items-center justify-center pl-1">{icon}</span>
      <span className="whitespace-nowrap">{text}(<u>{k}</u>){tail}</span>
      {sub && <Svg w={6} h={10} className="ml-auto"><path d="M.8.8 5 5 .8 9.200" strokeWidth="1.300" /></Svg>}
    </button>
  );
}
const Rule = () => <div className="my-px ml-[33px] mr-px h-px bg-[#d8d8d8]" />;

function ContextMenu() {
  return (
    <div role="menu" className="absolute left-[362px] top-[254px] w-[224px] border border-[#c6c6c6] bg-white pb-6 pt-[5px] text-[12px] text-[#262626] shadow-md">
      <input
        aria-label="搜索菜单"
        placeholder="搜索菜单"
        className="mb-1 ml-[5px] block h-[30px] w-[212px] border border-[#bdbdbd] pb-1 pl-3 text-[12px] placeholder:text-[#666] focus:outline-none"
      />
      <Item icon={<Scissors />} text="剪切" k="T" />
      <Item icon={<Copy />} text="复制" k="C" />
      <div className="flex h-8 items-center">
        <span className="flex w-[38px] items-center justify-center pb-1 pl-1"><PasteSmall /></span>
        <b>粘贴选项:</b>
      </div>
      <div className="flex h-[33px] items-center gap-2 pb-1 pl-[39px]">
        <button type="button" aria-label="保留源格式"><PasteFormat /></button>
        <button type="button" aria-label="只保留文本"><PasteText /></button>
      </div>
      <Item text="选择性粘贴" k="S" tail="..." />
      <Rule />
      <Item icon={<SmartLookup />} text="智能查找" k="L" />
      <Rule />
      <Item text="插入" k="I" tail="..." />
      <Item text="删除" k="D" tail="..." />
      <Item text="清除内容" k="N" />
      <Rule />
      <Item icon={<QuickAnalysis />} text="快速分析" k="Q" disabled />
      <Item text="筛选" k="E" sub />
      <Item text="排序" k="O" sub />
      <Rule />
      <Item icon={<TableIcon />} text="从表格/区域获取数据" k="G" tail="..." />
      <Rule />
      <Item icon={<CommentNew />} text="新建批注" k="M" />
      <Item icon={<NoteNew />} text="新建注释" k="N" />
      <Item icon={<CommentDel />} text="删除批注" k="M" />
      <Rule />
      <Item icon={<FormatCells />} text="设置单元格格式" k="F" tail="..." />
      <Item text="从下拉列表中选择" k="K" tail="..." />
    </div>
  );
}

function Arrow() {
  return (
    <svg className="pointer-events-none absolute left-[280px] top-[530px] drop-shadow-[2px_3px_2px_rgba(0,0,0,0.5)]" width="140" height="76" viewBox="0 0 140 76" aria-hidden="true">
      <path d="M7.500 64.500 109 16l2.500 5.500L8.500 67z" fill="#e60f0f" />
      <path d="M130 6.500 104 12.500l6.500 6.500 1.500 9.500z" fill="#f01010" />
    </svg>
  );
}

function Watermark() {
  return (
    <div className="pointer-events-none absolute bottom-[7px] right-3 flex items-end">
      <svg width="44" height="42" viewBox="0 0 44 42" className="mb-px" aria-hidden="true">
        <path d="M40 0C22 2 4 9 1 24c-1 6 3 11 9 11-5-3-6-9-1-15C14 13 25 5 40 0z" fill="#5aa6da" opacity=".9" />
        <path d="M10 35c10 1 22-5 20-13-1-5-12-5-16 1-3 5 2 8 6 5-1 3-8 4-10-1-2-6 5-13 14-13 8 0 12 6 8 13-4 7-14 10-22 8z" fill="#6d9fdc" opacity=".85" />
        <path d="M38 13c6 8-1 22-14 26-7 2-14 2-18 0 12 0 24-5 29-14 2-4 3-8 3-12z" fill="#7cc47a" opacity=".9" />
        <path d="M6 39c8 0 16-2 22-6-4 5-14 9-22 6z" fill="#e5e25c" opacity=".8" />
      </svg>
      <div className="flex flex-col">
        <span className="whitespace-nowrap font-['Noto_Sans_CJK_SC',sans-serif] text-[21px] font-bold leading-6 text-[#6fa9d8]/80">极光下载站</span>
        <span className="font-['Liberation_Sans',sans-serif] text-[17px] leading-[18px] text-[#5fb878]">www.xz7.com</span>
      </div>
    </div>
  );
}

export default function App() {
  return (
    <div className="relative flex h-screen min-w-0 flex-col overflow-hidden bg-[#e6e6e6] font-['Open_Sans','Noto_Sans_CJK_SC',sans-serif] text-[#444]">
      <TitleBar />
      <div className="flex shrink-0 flex-col bg-[#f3f2f1]">
        <TabRow />
        <Ribbon />
      </div>
      <NoticeBar />
      <FormulaBar />
      <Sheet />
      <SheetTabs />
      <StatusBar />
      <ContextMenu />
      <MiniToolbar />
      <Arrow />
      <Watermark />
    </div>
  );
}
